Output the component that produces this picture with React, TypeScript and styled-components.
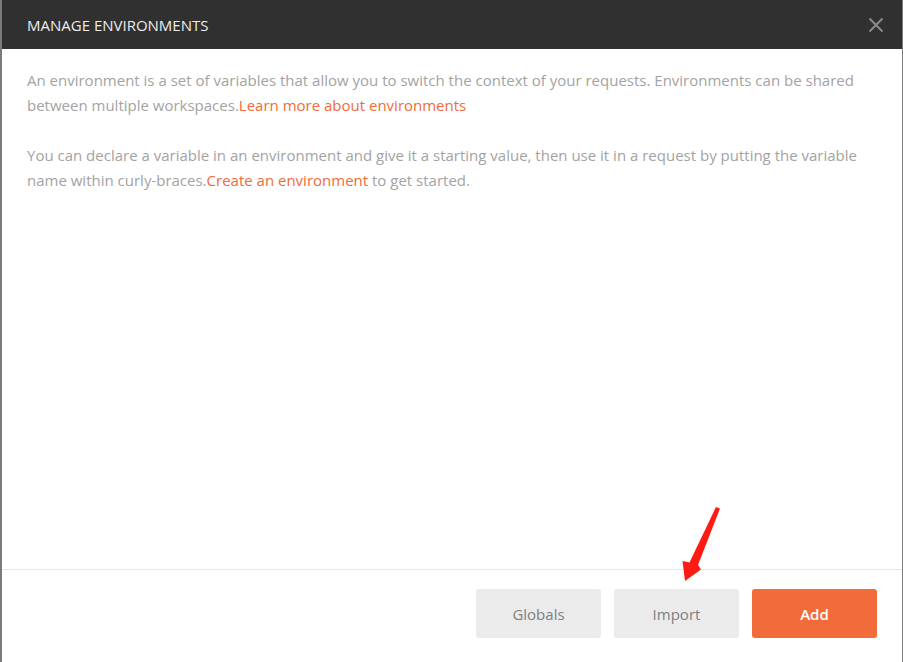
import React from "react";
import styled, { createGlobalStyle } from "styled-components";

const GlobalStyle = createGlobalStyle`
  html, body { margin: 0; padding: 0; background: #ffffff; }
  body { font-family: "Open Sans", "Noto Sans", sans-serif; }
  * { box-sizing: border-box; }
`;

const Modal = styled.div`
  position: relative;
  width: 903px;
  height: 662px;
  display: flex;
  flex-direction: column;
  background: #ffffff;
  border-left: 2px solid #7b7b7b;
  border-right: 1px solid #7b7b7b;
`;

const Header = styled.header`
  height: 49px;
  flex: none;
  background: #303030;
  display: flex;
  align-items: center;
  justify-content: space-between;
  padding: 0 17px 0 25px;
`;

const Title = styled.h1`
  margin: 0;
  font-size: 15px;
  font-weight: 400;
  color: #ececec;
  letter-spacing: 0;
  padding-top: 1px;
`;

const CloseButton = styled.button`
  width: 18px;
  height: 18px;
  padding: 0;
  border: 0;
  background: transparent;
  display: flex;
  align-items: center;
  justify-content: center;
  cursor: pointer;
`;

const Body = styled.div`
  flex: 1;
  padding: 19px 25px 0 25px;
`;

const Paragraph = styled.p`
  margin: 0 0 25px 0;
  font-size: 15px;
  line-height: 25px;
  color: #a3a3a3;
`;

const Link = styled.a`
  color: #f26b3a;
  text-decoration: none;
  cursor: pointer;
`;

const Footer = styled.footer`
  flex: none;
  border-top: 1px solid #e6e6e6;
  padding: 19px 25px 24px 0;
  display: flex;
  justify-content: flex-end;
  gap: 13px;
`;

const Button = styled.button<{ $primary?: boolean }>`
  width: 125px;
  height: 49px;
  border: 0;
  border-radius: 3px;
  font-family: "Open Sans", "Noto Sans", sans-serif;
  font-size: 15px;
  font-weight: ${(p) => (p.$primary ? 600 : 400)};
  color: ${(p) => (p.$primary ? "#ffffff" : "#808080")};
  background: ${(p) => (p.$primary ? "#f26b3a" : "#ebebeb")};
  cursor: pointer;
`;

const Annotation = styled.svg`
  position: absolute;
  left: 0;
  top: 0;
  pointer-events: none;
`;

export default function App() {
  return (
    <>
      <GlobalStyle />
      <Modal>
        <Header>
          <Title>MANAGE ENVIRONMENTS</Title>
          <CloseButton aria-label="Close">
            <svg width="16" height="16" viewBox="0 0 16 16">
              <path d="M1.5 1.5 L14.5 14.5 M14.5 1.5 L1.5 14.5" stroke="#8a8a8a" strokeWidth="2" />
            </svg>
          </CloseButton>
        </Header>
        <Body>
          <Paragraph>
            An environment is a set of variables that allow you to switch the context of your requests. Environments can be shared between multiple workspaces.
            <Link>Learn more about environments</Link>
          </Paragraph>
          <Paragraph>
            You can declare a variable in an environment and give it a starting value, then use it in a request by putting the variable name within curly-braces.
            <Link>Create an environment</Link> to get started.
          </Paragraph>
        </Body>
        <Footer>
          <Button>Globals</Button>
          <Button>Import</Button>
          <Button $primary>Add</Button>
        </Footer>
        <Annotation width="903" height="662" viewBox="0 0 903 662">
          <polygon
            points="714,507 718,508.5 696,565 699,569.5 683,581 680.5,561 687.5,562.5"
            fill="#ff1a14"
          />
        </Annotation>
      </Modal>
    </>
  );
}
